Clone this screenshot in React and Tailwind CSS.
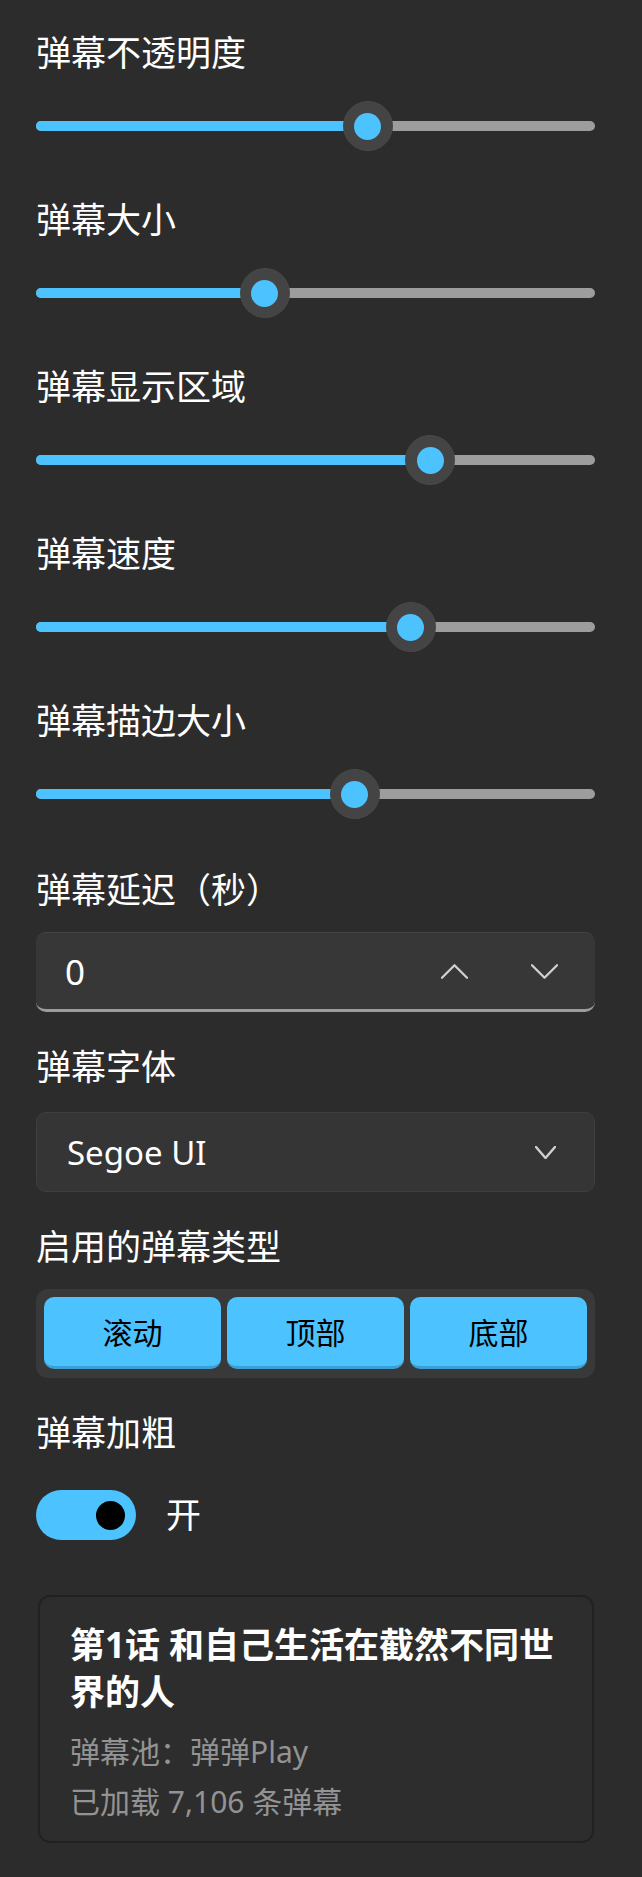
import React from "react";

const FONT = { fontFamily: '"Noto Sans", "Noto Sans CJK SC", sans-serif' };

const sliders = [
  { label: "弹幕不透明度", value: 60.3 },
  { label: "弹幕大小", value: 40 },
  { label: "弹幕显示区域", value: 72.5 },
  { label: "弹幕速度", value: 68.7 },
  { label: "弹幕描边大小", value: 57.7 },
];

function Label({ children, className = "" }) {
  return (
    <div className={"text-[35px] leading-[48px] text-white " + className}>{children}</div>
  );
}

function Slider({ value }) {
  const left = 25 + (value / 100) * 509;
  return (
    <div className="relative mt-[24px] h-[50px] w-full">
      <div className="absolute left-0 right-0 top-[20px] flex h-[10px] overflow-hidden rounded-full bg-[#9d9d9d]">
        <div className="h-full bg-[#4cc2ff]" style={{ width: left }} />
      </div>
      <div
        className="absolute top-0 flex h-[50px] w-[50px] -translate-x-1/2 items-center justify-center rounded-full border border-[#494949] bg-[#444444]"
        style={{ left }}
      >
        <div className="h-[27px] w-[27px] rounded-full bg-[#4cc2ff]" />
      </div>
    </div>
  );
}

function Chevron({ dir, w, h, className = "" }) {
  const pts = dir === "up" ? `1,${h - 1} ${w / 2},1 ${w - 1},${h - 1}` : `1,1 ${w / 2},${h - 1} ${w - 1},1`;
  return (
    <svg width={w} height={h} viewBox={`0 0 ${w} ${h}`} className={className}>
      <polyline points={pts} fill="none" stroke="#d0d0d0" strokeWidth="2.4" strokeLinecap="round" strokeLinejoin="round" />
    </svg>
  );
}

export default function App() {
  return (
    <div className="min-h-[1877px] w-full bg-[#2c2c2c]" style={FONT}>
      <div className="ml-[36px] w-[559px] pt-[29px]">
        {sliders.map((s, i) => (
          <div key={s.label} className={i > 0 ? "mt-[45px]" : ""}>
            <Label>{s.label}</Label>
            <Slider value={s.value} />
          </div>
        ))}

        <Label className="mt-[47px]">弹幕延迟（秒）</Label>
        <div className="mt-[18px] flex h-[80px] items-center rounded-[10px] border-t border-t-[#444444] border-b-[3px] border-b-[#9c9c9c] bg-[#373737] pl-[29px]">
          <span className="flex-1 text-[35px] leading-none text-white">0</span>
          <div className="flex w-[27px] justify-center">
            <Chevron dir="up" w={28} h={15} />
          </div>
          <div className="ml-[63px] mr-[37px] flex w-[27px] justify-center">
            <Chevron dir="down" w={28} h={15} />
          </div>
        </div>

        <Label className="mt-[31px]">弹幕字体</Label>
        <div className="mt-[21px] flex h-[80px] items-center rounded-[10px] border border-[#3f3f3f] bg-[#353535] pl-[30px] pr-[38px]">
          <span className="flex-1 text-[33px] leading-none text-white">Segoe UI</span>
          <Chevron dir="down" w={21} h={13} />
        </div>

        <Label className="mt-[31px]">启用的弹幕类型</Label>
        <div className="mt-[18px] flex gap-[6px] rounded-[12px] bg-[#393939] p-[8px] pb-[9px]">
          {["滚动", "顶部", "底部"].map((t) => (
            <div
              key={t}
              className="flex h-[72px] flex-1 items-center justify-center rounded-[10px] border-b-[3px] border-b-[#3b9fd6] bg-[#4cc2ff] pt-[2px] text-[30px] leading-none text-black"
            >
              {t}
            </div>
          ))}
        </div>

        <Label className="mt-[31px]">弹幕加粗</Label>
        <div className="mt-[33px] flex items-center">
          <div className="flex h-[50px] w-[100px] items-center justify-end rounded-full bg-[#4cc2ff] pr-[11px]">
            <div className="h-[29px] w-[29px] rounded-full bg-black" />
          </div>
          <span className="ml-[30px] text-[35px] leading-[48px] text-white">开</span>
        </div>

        <div className="ml-[2px] mt-[55px] w-[556px] rounded-[12px] border-2 border-[#212121] bg-[#2d2d2d] px-[30px] pb-[14px] pt-[24px]">
          <div className="text-[35px] font-bold leading-[47px] text-white">第1话 和自己生活在截然不同世界的人</div>
          <div className="mt-[12px] text-[30px] leading-[50px] text-[#939393]">弹幕池：弹弹Play</div>
          <div className="text-[30px] leading-[50px] text-[#939393]">已加载 7,106 条弹幕</div>
        </div>
      </div>
    </div>
  );
}
